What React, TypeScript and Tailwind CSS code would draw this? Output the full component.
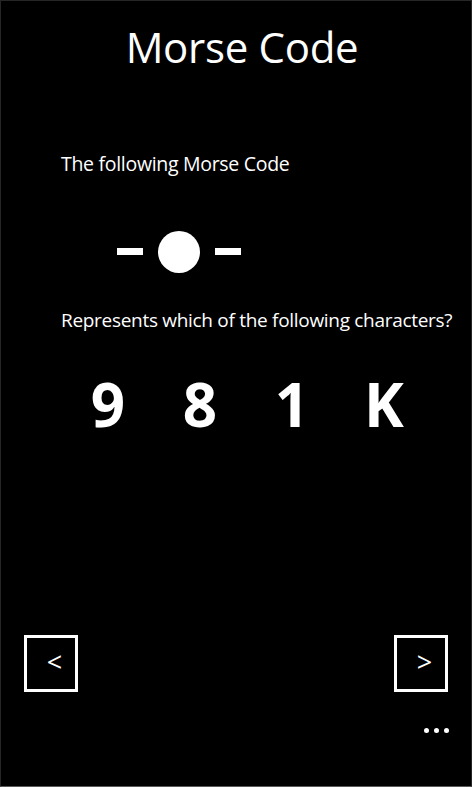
import React from "react";

export default function App() {
  const choices = ["9", "8", "1", "K"];
  return (
    <div
      className="w-[472px] h-[787px] bg-black text-white flex flex-col border border-[#262626] border-b-[#5a5a5a] overflow-hidden"
      style={{ fontFamily: '"Open Sans", "Noto Sans", sans-serif' }}
    >
      <h1 className="text-center pl-[12px] text-[42px] leading-none font-normal mt-[25px] tracking-[-0.3px]">
        Morse Code
      </h1>
      <p className="ml-[60px] mt-[86px] text-[19.5px] leading-none tracking-[-0.3px]">
        The following Morse Code
      </p>
      <div className="ml-[116px] mt-[57px] flex items-center gap-[15px] h-[42px]">
        <div className="w-[26px] h-[7px] bg-white" />
        <div className="w-[42px] h-[42px] rounded-full bg-white" />
        <div className="w-[26px] h-[7px] bg-white" />
      </div>
      <p className="ml-[60px] mt-[38px] text-[19px] leading-none tracking-[-0.3px]">
        Represents which of the following characters?
      </p>
      <div className="ml-[61px] mt-[44px] grid grid-cols-[repeat(4,92px)]">
        {choices.map((c) => (
          <div key={c} className="text-center text-[60px] font-bold leading-none">
            {c}
          </div>
        ))}
      </div>
      <div className="mt-auto flex justify-between px-[23px]">
        <div className="w-[54px] h-[57px] border-[3px] border-white flex items-center justify-center text-[27px] leading-none pb-[4px] pl-[7px]">
          &lt;
        </div>
        <div className="w-[54px] h-[57px] border-[3px] border-white flex items-center justify-center text-[27px] leading-none pb-[4px] pl-[7px]">
          &gt;
        </div>
      </div>
      <div className="flex justify-end gap-[5px] pr-[22px] mt-[36px] mb-[53px]">
        <div className="w-[5px] h-[5px] rounded-full bg-white" />
        <div className="w-[5px] h-[5px] rounded-full bg-white" />
        <div className="w-[5px] h-[5px] rounded-full bg-white" />
      </div>
    </div>
  );
}
